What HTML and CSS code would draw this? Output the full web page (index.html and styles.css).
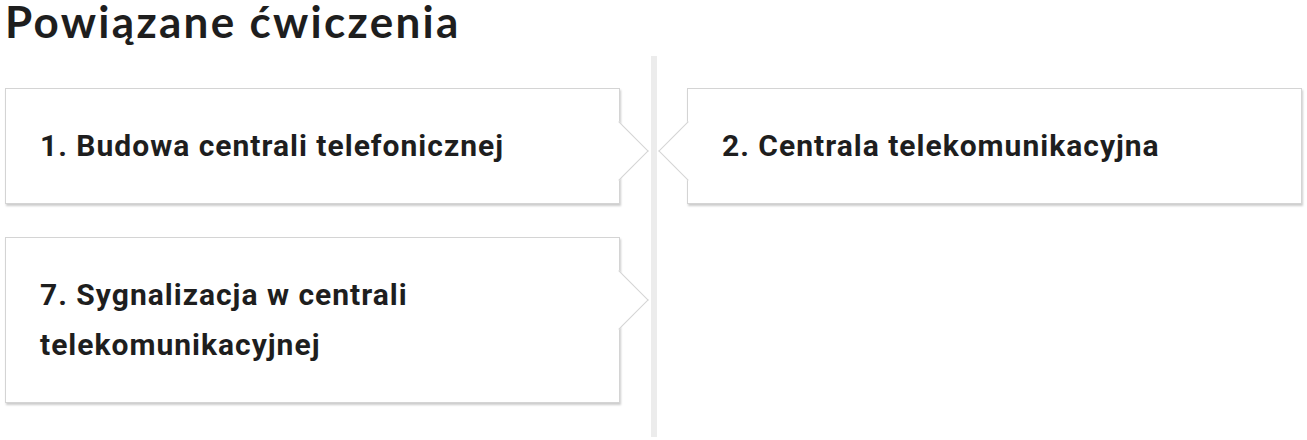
FILE: index.html
```html
<!DOCTYPE html>
<html lang="pl">
<head>
<meta charset="utf-8">
<title>Powiązane ćwiczenia</title>
<link rel="stylesheet" href="styles.css">
</head>
<body>
  <section class="related">
    <h2 class="related-title">Powiązane ćwiczenia</h2>
    <div class="timeline">
      <a class="entry entry-left" href="#">1. Budowa centrali telefonicznej</a>
      <a class="entry entry-right" href="#">2. Centrala telekomunikacyjna</a>
      <a class="entry entry-left" href="#">7. Sygnalizacja w centrali telekomunikacyjnej</a>
    </div>
  </section>
</body>
</html>
```

FILE: styles.css
```css
* {
  box-sizing: border-box;
}

html, body {
  margin: 0;
  background: #fff;
}

.related {
  padding: 0 5px;
}

.related-title {
  margin: -5px 0 8px;
  font-family: Lato, "Noto Sans", sans-serif;
  font-weight: 700;
  font-size: 44px;
  line-height: 1.2;
  letter-spacing: 2.3px;
  color: #1e1e1e;
}

/* two-column timeline; the centre rule is painted as a background stripe */
.timeline {
  display: grid;
  grid-template-columns: 1fr 1fr;
  column-gap: 67px;
  row-gap: 33px;
  align-items: start;
  padding: 32px 0 34px;
  background: linear-gradient(#ececec, #ececec) center top / 6px 100% no-repeat;
}

.entry {
  position: relative;
  display: block;
  padding: 32px 34px;
  background: #fff;
  border: 1px solid #d4d4d4;
  box-shadow: 1px 2px 2px rgba(0, 0, 0, 0.2);
  font-family: Roboto, "Liberation Sans", sans-serif;
  font-weight: 700;
  font-size: 30px;
  line-height: 50px;
  letter-spacing: 1px;
  color: #1e1e1e;
  text-decoration: none;
}

.entry-left {
  grid-column: 1;
}

.entry-right {
  grid-column: 2;
}

/* pointer toward the centre rule */
.entry::after {
  content: "";
  position: absolute;
  top: 41px;
  width: 41px;
  height: 41px;
  background: #fff;
  transform: rotate(45deg);
}

.entry-left::after {
  right: -21px;
  border-top: 1px solid #d4d4d4;
  border-right: 1px solid #d4d4d4;
}

.entry-right::after {
  left: -21px;
  border-bottom: 1px solid #d4d4d4;
  border-left: 1px solid #d4d4d4;
}
```
